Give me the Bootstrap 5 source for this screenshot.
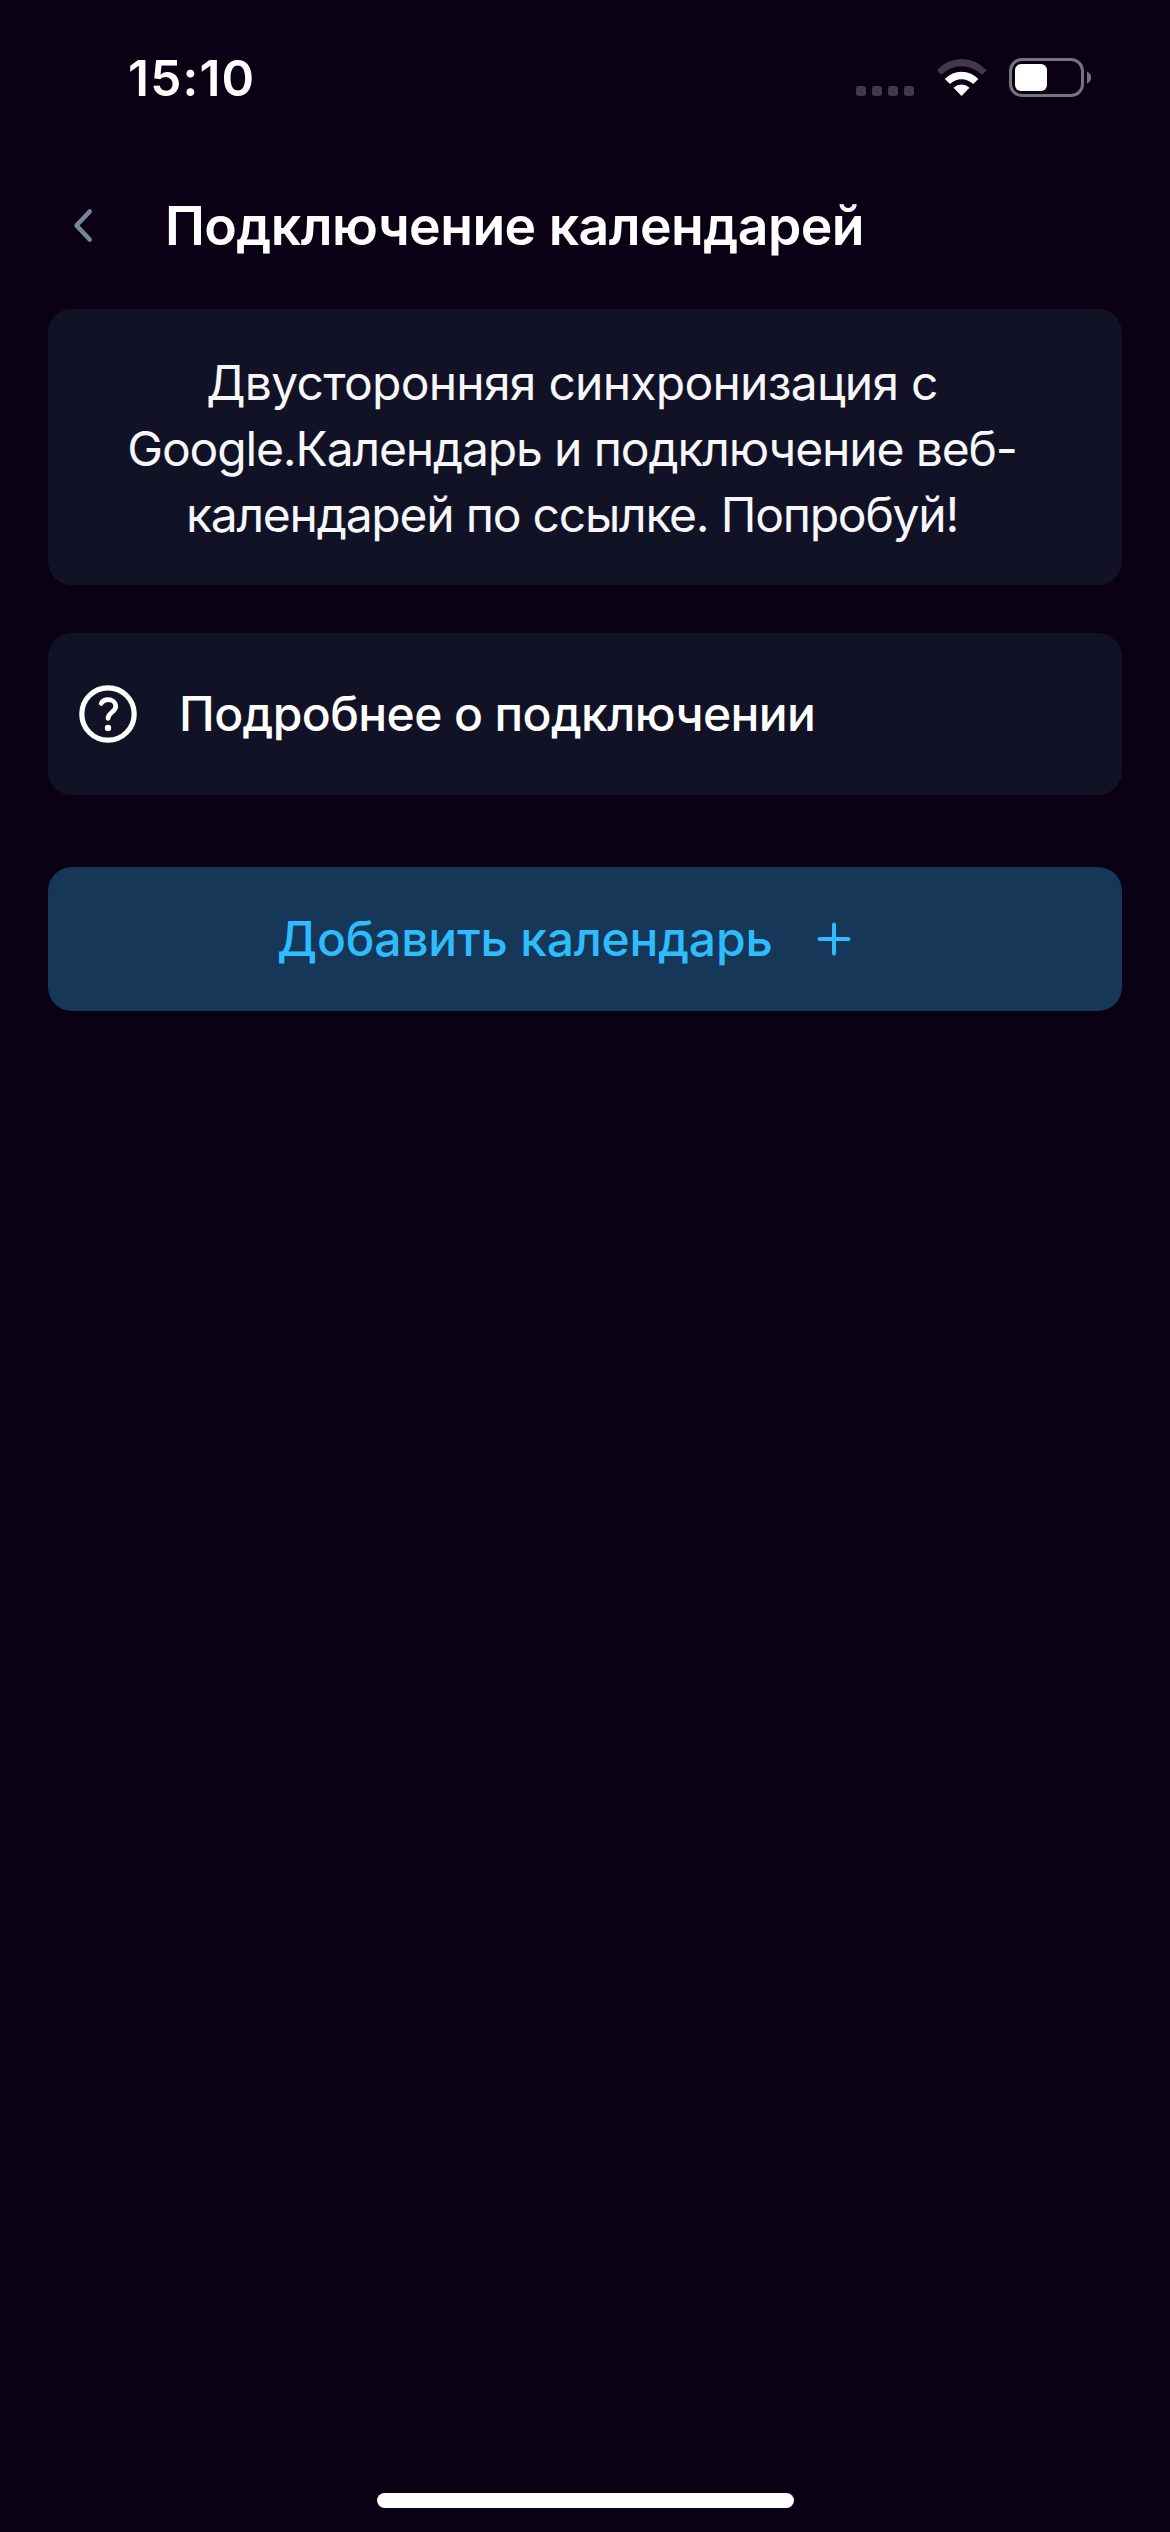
<!DOCTYPE html>
<html lang="ru" data-bs-theme="dark">
<head>
<meta charset="utf-8">
<meta name="viewport" content="width=device-width, initial-scale=1">
<title>Подключение календарей</title>
<link href="https://cdn.jsdelivr.net/npm/bootstrap@5.3.0/dist/css/bootstrap.min.css" rel="stylesheet">
<style>
  body { background: #0b0114; color: #fff; font-family: Inter, "Noto Sans", sans-serif; font-size: 48px; line-height: 66px; }
  svg { display: block; flex: none; }
  .screen { min-height: 2532px; }
  .status-bar { height: 156px; padding: 0 78px 0 128px; }
  .clock { font-size: 49.5px; font-weight: 600; letter-spacing: 1.2px; }
  .clock, .page-title, .info-line, .row-label, .add-label { white-space: nowrap; }
  .top-bar { height: 139px; margin-bottom: 14px; padding-left: 72px; }
  .page-title { font-size: 53.5px; font-weight: 600; letter-spacing: -.55px; line-height: 70px; margin-left: 71px; }
  .content { padding: 0 48px; }
  .panel { background: #121226; border: 0; border-radius: 24px; }
  .info-panel { height: 276px; padding-top: 41px; padding-right: 26px; color: #f7f7fa; }
  .info-line:nth-child(1) { letter-spacing: -.75px; }
  .info-line:nth-child(2) { letter-spacing: -1.14px; }
  .info-line:nth-child(3) { letter-spacing: -1.23px; }
  .help-row { height: 162px; margin-top: 48px; padding-left: 30px; color: #fff; }
  .row-label { font-weight: 500; letter-spacing: -.6px; margin-left: 41px; }
  .add-btn { height: 144px; margin-top: 72px; padding: 0 0 0 229px; border: 0; border-radius: 24px; background: #163757; color: #2dbdff; font-size: 48px; line-height: 66px; font-weight: 500; letter-spacing: -.2px; }
  .add-btn svg { margin-left: 43px; }
  .home-bar { width: 417px; height: 15px; margin-bottom: 24px; background: #fff; }
</style>
</head>
<body>
<div class="screen d-flex flex-column">
  <header class="status-bar d-flex align-items-center justify-content-between">
    <span class="clock">15:10</span>
    <svg width="236" height="40" viewBox="856 58 236 40" aria-hidden="true">
      <g fill="#423949">
        <rect x="856" y="86" width="10" height="10" rx="3.2"/>
        <rect x="872" y="86" width="10" height="10" rx="3.2"/>
        <rect x="888" y="86" width="10" height="10" rx="3.2"/>
        <rect x="904" y="86" width="10" height="10" rx="3.2"/>
      </g>
      <path d="M937 70Q947.500 59 961.500 59Q975.500 59 986.500 70.200L982 74.800Q973 66.200 961.500 66.200Q950 66.200 941.200 74.800Z" fill="#423949"/>
      <path d="M944.800 79Q952 71.800 961.500 71.800Q971 71.800 978.300 79L973.200 84Q968 79.300 961.500 79.300Q955 79.300 950 84Z" fill="#fff"/>
      <path d="M953.500 87.700Q957 84.600 961.500 84.600Q966 84.600 969.500 87.700L961.500 96Z" fill="#fff"/>
      <rect x="1010.500" y="59.500" width="72" height="36" rx="11.500" fill="none" stroke="#77737d" stroke-width="3"/>
      <rect x="1015" y="64" width="32" height="27" rx="6" fill="#fff"/>
      <path d="M1087 71.500Q1091.200 73.500 1091.200 77.500T1087 83.500Z" fill="#77737d"/>
    </svg>
  </header>

  <nav class="top-bar d-flex align-items-center" aria-label="Навигация">
    <svg width="22" height="36" viewBox="0 0 22 36" fill="none" stroke="#73879b" stroke-width="4.600" stroke-linecap="round" stroke-linejoin="round"><path d="M17.700 3.500 4.500 17.500 17.700 31.500"/></svg>
    <h1 class="page-title mb-0">Подключение календарей</h1>
  </nav>

  <main class="content flex-grow-1">
    <section class="card panel info-panel text-center">
      <span class="info-line">Двусторонняя синхронизация с</span>
      <span class="info-line">Google.Календарь и подключение веб-</span>
      <span class="info-line">календарей по ссылке. Попробуй!</span>
    </section>

    <a href="#" class="panel help-row d-flex align-items-center text-decoration-none">
      <svg width="60" height="60" viewBox="0 0 60 60" fill="none" stroke="#fff" stroke-linecap="round" stroke-linejoin="round">
        <circle cx="30" cy="30" r="26.200" stroke-width="5.200"/>
        <path d="M23.200 19.500C24.600 16.800 27 15.700 30 15.700C34.200 15.700 37.700 18.500 37.700 22.500C37.700 28 30.200 28.500 30 34.300" stroke-width="4.700"/>
        <circle cx="30" cy="44" r="3.200" fill="#fff" stroke="none"/>
      </svg>
      <span class="row-label">Подробнее о подключении</span>
    </a>

    <button type="button" class="btn add-btn w-100 d-flex align-items-center">
      <span class="add-label">Добавить календарь</span>
      <svg width="36" height="36" viewBox="0 0 36 36" fill="none" stroke="#2dbdff" stroke-width="4" stroke-linecap="round"><path d="M3.500 18H32.500M18 3.500V32.500"/></svg>
    </button>
  </main>

  <div class="home-bar rounded-pill mx-auto"></div>
</div>
<script src="https://cdn.jsdelivr.net/npm/bootstrap@5.3.0/dist/js/bootstrap.bundle.min.js"></script>
</body>
</html>
